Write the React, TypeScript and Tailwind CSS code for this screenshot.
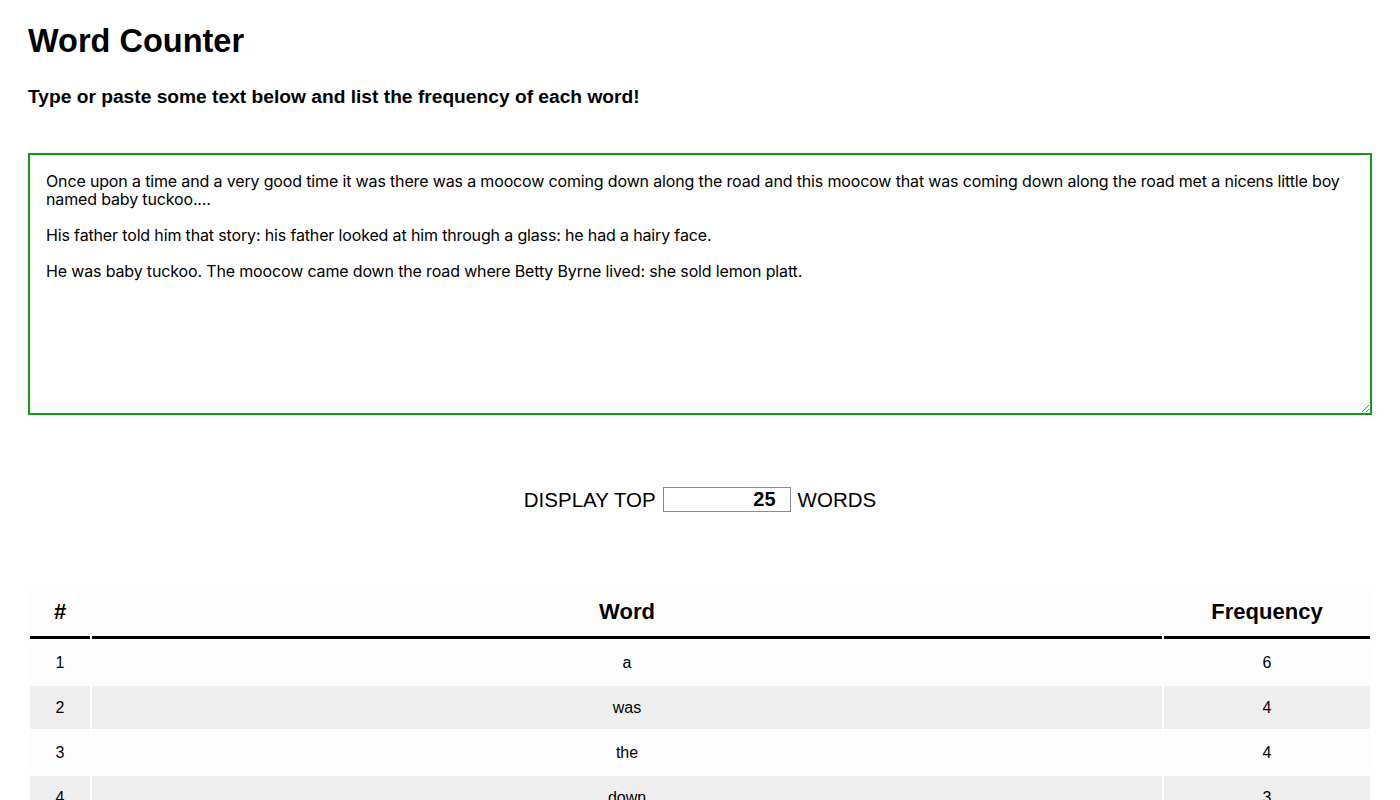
import { useState } from "react";

// texto inicial del área de escritura
const TEXTO_INICIAL =
  "Once upon a time and a very good time it was there was a moocow coming down along the road and this moocow that was coming down along the road met a nicens little boy named baby tuckoo....\n\nHis father told him that story: his father looked at him through a glass: he had a hairy face.\n\nHe was baby tuckoo. The moocow came down the road where Betty Byrne lived: she sold lemon platt.";

// resultados mostrados (palabra, frecuencia)
const RESULTADOS: [string, number][] = [
  ["a", 6],
  ["was", 4],
  ["the", 4],
  ["down", 3],
  ["moocow", 3],
  ["road", 3],
  ["time", 2],
  ["and", 2],
  ["coming", 2],
  ["along", 2],
  ["that", 2],
  ["baby", 2],
  ["tuckoo", 2],
  ["his", 2],
  ["father", 2],
  ["him", 2],
  ["he", 2],
  ["once", 1],
  ["upon", 1],
  ["very", 1],
  ["good", 1],
  ["it", 1],
  ["there", 1],
  ["this", 1],
  ["met", 1],
];

export default function App() {
  const [texto, setTexto] = useState(TEXTO_INICIAL);
  const [top, setTop] = useState(25);

  const filas = RESULTADOS.slice(0, top);

  return (
    <div className="min-h-screen bg-white px-[28px] pb-10 text-black font-['Liberation_Sans',Arial,sans-serif]">
      <h1 className="pt-[23px] text-[32.5px] font-bold leading-[37px]">Word Counter</h1>
      <h3 className="mt-[26px] text-[19.2px] font-bold leading-[21px]">
        Type or paste some text below and list the frequency of each word!
      </h3>

      {/* área de texto */}
      <textarea
        value={texto}
        onChange={(e) => setTexto(e.target.value)}
        spellCheck={false}
        className="mt-[46px] block h-[262px] w-full resize-y border-2 border-[#169a16] bg-white px-4 pt-[17px] pb-4 text-[16px] leading-[18px] tracking-[-0.15px] outline-none font-['Inter','Noto_Sans',sans-serif]"
      />

      {/* selector de cantidad */}
      <div className="mt-[72px] flex items-center justify-center gap-[7px] text-[20.5px] leading-[24px]">
        <span>DISPLAY TOP</span>
        <input
          type="text"
          value={top}
          onChange={(e) => setTop(Number(e.target.value) || 0)}
          className="h-[25px] w-[128px] border border-[#8a8a8a] bg-white pr-[14px] text-right text-[20px] font-bold outline-none"
        />
        <span>WORDS</span>
      </div>

      {/* tabla de resultados */}
      <table className="mt-[72px] w-full border-separate border-spacing-[2px] text-center">
        <thead>
          <tr>
            <th className="h-[53px] w-[60px] border-b-[3px] border-black bg-[#fdfdfd] text-[22px] font-bold">#</th>
            <th className="h-[53px] border-b-[3px] border-black bg-[#fdfdfd] text-[22px] font-bold">Word</th>
            <th className="h-[53px] w-[206px] border-b-[3px] border-black bg-[#fdfdfd] text-[22px] font-bold">Frequency</th>
          </tr>
        </thead>
        <tbody className="text-[16px]">
          {filas.map(([palabra, n], i) => (
            <tr key={palabra} className={i % 2 === 1 ? "bg-[#eeeeee]" : "bg-[#fdfdfd]"}>
              <td className="h-[43px]">{i + 1}</td>
              <td className="h-[43px]">{palabra}</td>
              <td className="h-[43px]">{n}</td>
            </tr>
          ))}
        </tbody>
      </table>
    </div>
  );
}
